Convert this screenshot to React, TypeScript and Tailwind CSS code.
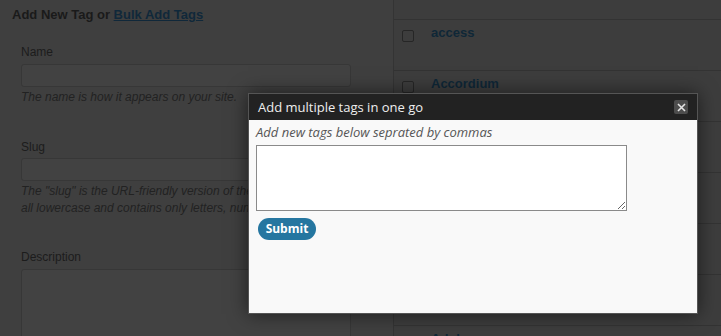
import React from "react";

// labels behind the dialog are not visible, so those rows stay blank
const rows = ["access", "Accordium", "", "", "", "", "Adobe"];

export default function App() {
  return (
    <div
      className="relative flex h-[336px] w-[721px] overflow-hidden bg-[#3f3f3f]"
      style={{ fontFamily: '"Liberation Sans", Arial, sans-serif' }}
    >
      {/* left: add tag form */}
      <div className="w-[393px] shrink-0 pl-3 pt-[7px]">
        <h3 className="text-[13px] font-bold leading-4 text-[color:#1a1a1a]">
          Add New Tag or <span className="text-[color:#10283a] underline">Bulk Add Tags</span>
        </h3>
        <div className="ml-[9px] mt-[21px]">
          <div>
            <div className="text-[12px] leading-4 text-[color:#1c1c1c]">Name</div>
            <div className="mt-[4px] h-[23px] w-[330px] rounded-[3px] border border-[#373737] bg-[#424242]" />
            <p className="mt-[2px] text-[12px] italic leading-4 text-[color:#222]">The name is how it appears on your site.</p>
          </div>
          <div className="mt-[34px]">
            <div className="text-[12px] leading-4 text-[color:#1c1c1c]">Slug</div>
            <div className="mt-[3px] h-[23px] w-[330px] rounded-[3px] border border-[#373737] bg-[#424242]" />
            <p className="mt-[2px] w-[340px] text-[12px] italic leading-[17px] text-[color:#222]">
              The "slug" is the URL-friendly version of the name. It is usually all lowercase and contains only letters, numbers, and hyphens.
            </p>
          </div>
          <div className="mt-[32px]">
            <div className="text-[12px] leading-4 text-[color:#1c1c1c]">Description</div>
            <div className="mt-[4px] h-[90px] w-[330px] rounded-[3px] border border-[#373737] bg-[#424242]" />
          </div>
        </div>
      </div>

      {/* right: tag list */}
      <div className="flex-1 border-l border-[#343434] bg-[#3d3d3d]">
        <div className="h-[20px] border-b border-[#333]" />
        {rows.map((r, i) => (
          <div key={i} className="flex h-[51px] items-start border-b border-[#333]">
            <div className="ml-[8px] mt-[10px] h-[12px] w-[12px] rounded-[2px] border border-[#262626] bg-[#3d3d3d]" />
            <div className="ml-[17px] mt-[5px] text-[13px] font-bold leading-4 text-[color:#0f2737]">{r}</div>
          </div>
        ))}
      </div>

      {/* modal */}
      <div
        className="absolute left-[248px] top-[93px] flex h-[221px] w-[450px] flex-col border border-[#555] bg-[#f9f9f9] shadow-[0_0_18px_rgba(0,0,0,0.55)]"
        style={{ fontFamily: '"Open Sans", "DejaVu Sans", sans-serif' }}
      >
        <div className="flex h-[26px] items-center justify-between bg-[#222] pl-[9px] pr-[9px]">
          <span className="text-[13px] leading-4 text-[color:#eee]">Add multiple tags in one go</span>
          <button className="flex h-[14px] w-[14px] items-center justify-center rounded-[2px] bg-[#4d4d4d]">
            <svg width="9" height="9" viewBox="0 0 9 9">
              <path d="M1 1 L8 8 M8 1 L1 8" stroke="#e5e5e5" strokeWidth="1.6" />
            </svg>
          </button>
        </div>
        <div className="px-[7px] pt-[4px]">
          <p className="text-[13px] italic leading-4 text-[color:#555]">Add new tags below seprated by commas</p>
          <textarea className="mt-[5px] block h-[66px] w-[371px] border border-[#8a8a8a] bg-white outline-none" />
          <button className="ml-[2px] mt-[7px] flex h-[22px] w-[58px] items-center justify-center rounded-full bg-[#2576a0] text-[12px] font-bold text-white">
            Submit
          </button>
        </div>
      </div>
    </div>
  );
}
